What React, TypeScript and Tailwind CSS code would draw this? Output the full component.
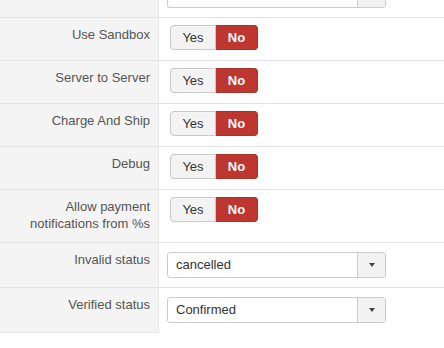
import React from "react";

const font = { fontFamily: '"Liberation Sans", Arial, sans-serif' };

function YesNo() {
  return (
    <div className="flex h-[25px] w-[88px] text-[13px] leading-none">
      <span className="flex w-[46px] items-center justify-center rounded-l-[4px] border border-[#c8c8c8] bg-[#f3f3f3] text-[#333] shadow-[inset_0_1px_0_rgba(255,255,255,0.3)]">
        Yes
      </span>
      <span className="flex w-[42px] items-center justify-center rounded-r-[4px] border border-[#a8322c] border-l-0 bg-[#bd362f] font-bold text-white">
        No
      </span>
    </div>
  );
}

function Select({ value }: { value: string }) {
  return (
    <div className="flex h-[26px] w-[219px] rounded-[3px] border border-[#ccc] bg-white text-[13px] text-[#333]">
      <span className="flex flex-1 items-center pl-[8px]">{value}</span>
      <span className="flex w-[28px] items-center justify-center border-l border-[#ccc] bg-[#f2f2f2] rounded-r-[3px]">
        <span className="h-0 w-0 border-x-[3.5px] border-t-[4px] border-x-transparent border-t-[#444]" />
      </span>
    </div>
  );
}

type Row = { label: string[]; kind: "toggle" | "select"; value?: string; h: string };

const rows: Row[] = [
  { label: ["Use Sandbox"], kind: "toggle", h: "h-[43px]" },
  { label: ["Server to Server"], kind: "toggle", h: "h-[43px]" },
  { label: ["Charge And Ship"], kind: "toggle", h: "h-[43px]" },
  { label: ["Debug"], kind: "toggle", h: "h-[43px]" },
  { label: ["Allow payment", "notifications from %s"], kind: "toggle", h: "h-[53px]" },
  { label: ["Invalid status"], kind: "select", value: "cancelled", h: "h-[45px]" },
  { label: ["Verified status"], kind: "select", value: "Confirmed", h: "h-[45px]" },
];

export default function App() {
  return (
    <div className="h-[348px] w-[444px] overflow-hidden bg-white" style={font}>
      {/* partial row cut off at the top */}
      <div className="flex h-[17px]">
        <div className="w-[159px] shrink-0 border-r border-[#e8e8e8] bg-[#f4f4f4]" />
        <div className="relative flex-1">
          <div className="absolute bottom-[9px] left-[8px] h-[26px] w-[219px] rounded-b-[3px] border border-[#ccc] border-t-0 bg-white">
            <div className="absolute bottom-0 right-0 top-0 w-[28px] border-l border-[#ccc] bg-[#f2f2f2]" />
          </div>
        </div>
      </div>
      {rows.map((r) => (
        <div key={r.label.join()} className={`flex border-t border-[#e3e3e3] ${r.h}`}>
          <div className="w-[159px] shrink-0 border-r border-[#e8e8e8] bg-[#f4f4f4] pr-[8px] pt-[8px] text-right text-[13px] leading-[17px] text-[#555]">
            {r.label.map((l) => (
              <div key={l}>{l}</div>
            ))}
          </div>
          <div className={r.kind === "toggle" ? "pl-[11px] pt-[7px]" : "pl-[8px] pt-[9px]"}>
            {r.kind === "toggle" ? <YesNo /> : <Select value={r.value!} />}
          </div>
        </div>
      ))}
      <div className="h-px w-[159px] bg-[#e8e8e8]" />
    </div>
  );
}
